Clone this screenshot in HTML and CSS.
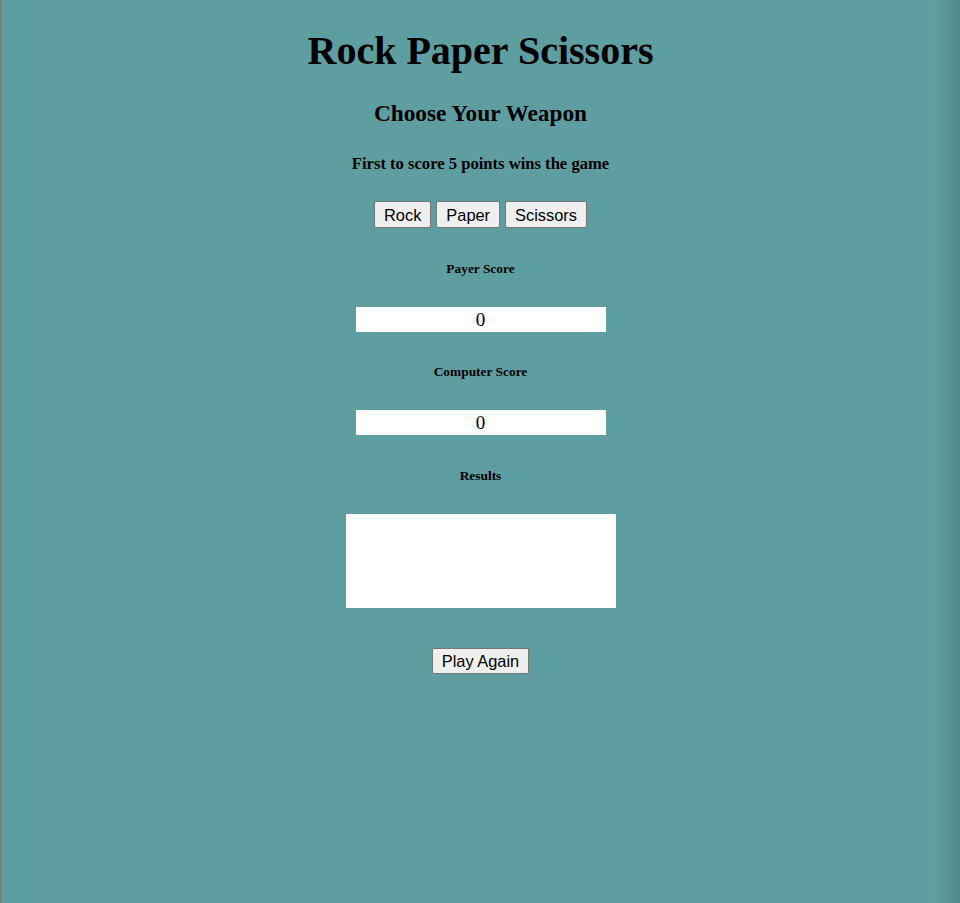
FILE: index.html
```html
<!DOCTYPE html>
<html>
<head>
<meta charset="utf-8">
<link rel="stylesheet" href="styles.css">
</head>
<body>
<div class="page">
  <h1 class="title">Rock Paper Scissors</h1>
  <h2 class="subtitle">Choose Your Weapon</h2>
  <h4 class="rule">First to score 5 points wins the game</h4>
  <div class="choices">
    <button class="btn">Rock</button>
    <button class="btn">Paper</button>
    <button class="btn">Scissors</button>
  </div>
  <h5 class="label">Payer Score</h5>
  <div class="score">0</div>
  <h5 class="label">Computer Score</h5>
  <div class="score">0</div>
  <h5 class="label">Results</h5>
  <div class="results"></div>
  <div class="again">
    <button class="btn">Play Again</button>
  </div>
</div>
</body>
</html>
```
FILE: styles.css
```css
html {
  height: 100%;
  background:
    linear-gradient(to right, rgba(0,0,0,0) calc(100% - 28px), rgba(0,0,0,0.12) calc(100% - 1px), #7a7a7a calc(100% - 1px)),
    #5f9ea0;
}
body {
  margin: 0;
  min-height: 100%;
  border-left: 1px solid #7a7a7a;
  box-sizing: border-box;
  font-family: "Liberation Serif", "Times New Roman", serif;
  color: #000;
}
.page {
  display: flex;
  flex-direction: column;
  align-items: center;
  padding-top: 29px;
}
.title {
  font-size: 40px;
  margin: 0;
  line-height: 44px;
}
.subtitle {
  font-size: 23.3px;
  margin: 27px 0 0;
  line-height: 26px;
}
.rule {
  font-size: 16.6px;
  margin: 28px 0 0;
  line-height: 20px;
}
.choices {
  display: flex;
  gap: 5px;
  margin-top: 27px;
}
.btn {
  box-sizing: border-box;
  font-family: "Liberation Sans", Arial, sans-serif;
  font-size: 16.4px;
  line-height: 18px;
  padding: 3px 9px;
  background: #efefef;
  border: 1px solid #767676;
  border-radius: 2px;
  color: #000;
  height: 27px;
}
.label {
  font-size: 13.4px;
  margin: 0;
  line-height: 16px;
}
.choices + .label {
  margin-top: 33px;
}
.score {
  width: 250px;
  height: 25px;
  background: #fff;
  text-align: center;
  font-size: 19px;
  line-height: 25px;
  margin: 30px 0 32px;
}
.score + .label + .score {
  margin-top: 30px;
  margin-bottom: 33px;
}
.results {
  width: 270px;
  height: 94px;
  background: #fff;
  margin: 30px 0 0;
}
.again {
  margin-top: 40px;
}
.again .btn {
  height: 26px;
}
```
